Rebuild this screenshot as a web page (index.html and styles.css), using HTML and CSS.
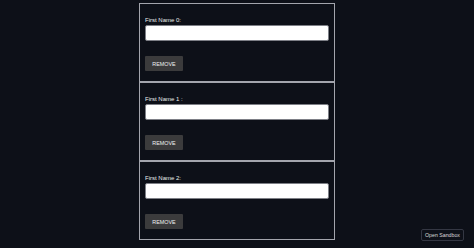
FILE: index.html
```html
<!DOCTYPE html>
<html lang="en">
<head>
    <meta charset="UTF-8">
    <meta name="viewport" content="width=device-width, initial-scale=1.0">
    <title>Names</title>
    <link rel="stylesheet" href="styles.css">
</head>
<body>

<div class="list">
    <div class="card">
        <label class="label">First Name 0:</label>
        <input class="field" type="text">
        <button class="remove">REMOVE</button>
    </div>
    <div class="card">
        <label class="label">First Name 1 :</label>
        <input class="field" type="text">
        <button class="remove">REMOVE</button>
    </div>
    <div class="card">
        <label class="label">First Name 2:</label>
        <input class="field" type="text">
        <button class="remove">REMOVE</button>
    </div>
</div>

<button class="sandbox">Open Sandbox</button>

</body>
</html>
```

FILE: styles.css
```css
body {
    margin: 0;
    height: 248px;
    background: #0d1018;
    font-family: "Liberation Sans", Arial, sans-serif;
    overflow: hidden;
}

.list {
    width: 196px;
    margin: 3px auto 0;
    display: flex;
    flex-direction: column;
}

.card {
    display: flex;
    flex-direction: column;
    align-items: flex-start;
    padding: 12px 5px 10px;
    border: 1px solid #a3a5ad;
}

.label {
    font-size: 6px;
    line-height: 8px;
    color: #ececec;
}

.field {
    box-sizing: border-box;
    width: 100%;
    height: 16px;
    margin: 1px 0 0;
    border: 1px solid #7d7f86;
    border-radius: 2px;
    background: #ffffff;
    padding: 0 4px;
}

.remove {
    margin-top: 15px;
    width: 38px;
    height: 15px;
    padding: 0;
    border: none;
    border-radius: 1px;
    background: #3b3b3c;
    color: #f0f0f0;
    font-family: "Liberation Sans", Arial, sans-serif;
    font-size: 5.4px;
}

.sandbox {
    position: absolute;
    right: 10px;
    bottom: 7px;
    height: 12px;
    padding: 0 3px;
    background: #0d1018;
    border: 1px solid #343743;
    border-radius: 2px;
    color: #d8d8d8;
    font-family: "Liberation Sans", Arial, sans-serif;
    font-size: 5.25px;
}
```
